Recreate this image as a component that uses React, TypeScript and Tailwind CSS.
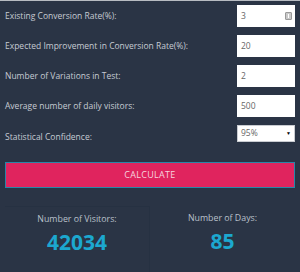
import React from 'react'

const rows = [
  { label: 'Existing Conversion Rate(%):', value: '3', spinner: true },
  { label: 'Expected Improvement in Conversion Rate(%):', value: '20' },
  { label: 'Number of Variations in Test:', value: '2' },
  { label: 'Average number of daily visitors:', value: '500' },
]

function Spinner() {
  return (
    <span className="flex h-[8px] w-[7px] items-center justify-center rounded-[1px] border border-[#9a9a9a] bg-[#c9c9c9]">
      <span className="h-[4px] w-[1px] bg-white" />
    </span>
  )
}

export default function App() {
  return (
    <div className="flex h-[272px] w-[300px] flex-col overflow-hidden border-t border-[#b8bcc2] bg-[#2a3445] px-[5px] font-['Open_Sans',sans-serif] text-[8.5px] text-[#c6cbd3]">
      <div className="flex flex-col gap-2 pt-[4px]">
        {rows.map(r => (
          <div key={r.label} className="flex h-[22px] items-center justify-between">
            <span className="pt-[1px]">{r.label}</span>
            <div className="flex h-[22px] w-[58px] items-center justify-between bg-white pl-[4px] pr-[3px] text-[8.5px] text-[#666]">
              <span>{r.value}</span>
              {r.spinner ? <Spinner /> : null}
            </div>
          </div>
        ))}
        <div className="flex h-[22px] items-center justify-between">
          <span className="pt-[2px]">Statistical Confidence:</span>
          <div className="flex h-[17px] w-[58px] items-center justify-between self-start border border-[#c9ccd1] bg-white pl-[3px] pr-[3px] text-[8.5px] text-[#666]">
            <span>95%</span>
            <span className="text-[5px] text-black">▼</span>
          </div>
        </div>
      </div>

      <button className="mt-[15px] flex h-[26px] w-full items-center justify-center border border-[#2a86a8] bg-[#e0245e] text-[9px] tracking-[0.3px] text-[#f6d3de]">
        CALCULATE
      </button>

      <div className="mt-[18px] grid flex-1 grid-cols-2">
        <div className="flex flex-col items-center border-t border-r border-[#263142] pt-[6px]">
          <span className="text-[8.8px] text-[#b9c0ca]">Number of Visitors:</span>
          <span className="mt-[2px] text-[21px] font-bold leading-[28px] text-[#1ca8cf]">42034</span>
        </div>
        <div className="flex flex-col items-center pt-[6px]">
          <span className="text-[8.8px] text-[#b9c0ca]">Number of Days:</span>
          <span className="mt-[2px] text-[21px] font-bold leading-[28px] text-[#1ca8cf]">85</span>
        </div>
      </div>
    </div>
  )
}
